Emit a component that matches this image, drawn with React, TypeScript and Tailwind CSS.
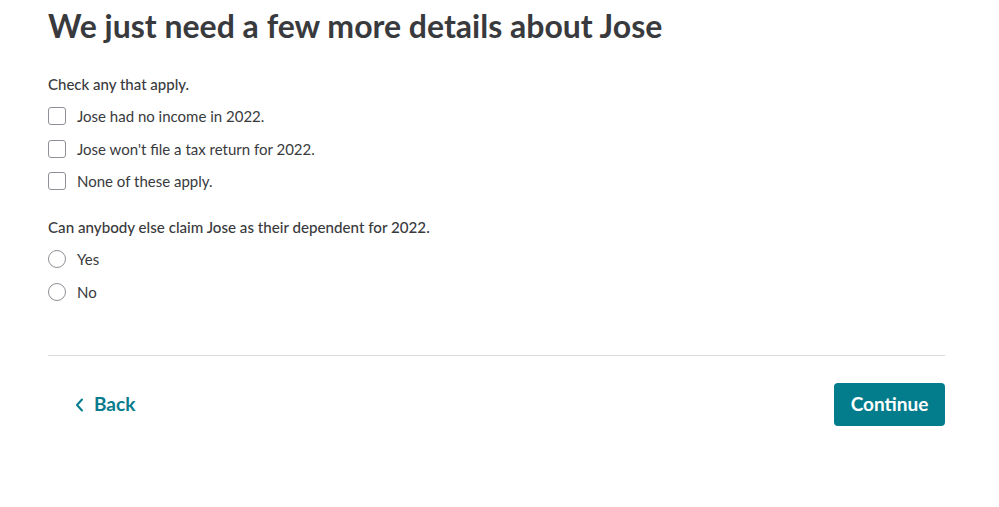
import React from "react";

export default function App() {
  return (
    <div className="w-[999px] h-[507px] bg-white text-[#393a3d]" style={{ fontFamily: "Lato, 'Open Sans', sans-serif" }}>
      <div className="ml-[48px] w-[897px] pt-[8px]">
        <h1 className="text-[32px] leading-[36px] font-bold text-[#393a3d]">We just need a few more details about Jose</h1>
        <p className="mt-[30px] text-[15px] leading-[20px] font-medium">Check any that apply.</p>
        <div className="mt-[12px] flex flex-col gap-[12.5px]">
          {["Jose had no income in 2022.", "Jose won't file a tax return for 2022.", "None of these apply."].map((t) => (
            <label key={t} className="flex items-center gap-[11px] h-[20px]">
              <span className="w-[18px] h-[18px] rounded-[3px] border border-[#8d9096] bg-white" />
              <span className="text-[15px] leading-[20px]">{t}</span>
            </label>
          ))}
        </div>
        <p className="mt-[26px] text-[15.15px] leading-[20px] font-medium">Can anybody else claim Jose as their dependent for 2022.</p>
        <div className="mt-[12px] flex flex-col gap-[13px]">
          {["Yes", "No"].map((t) => (
            <label key={t} className="flex items-center gap-[11px] h-[20px]">
              <span className="w-[18px] h-[18px] rounded-full border border-[#8d9096] bg-white" />
              <span className="text-[15px] leading-[20px]">{t}</span>
            </label>
          ))}
        </div>
        <div className="mt-[53px] border-t border-[#dcdcdc]" />
        <div className="mt-[27px] flex items-center justify-between">
          <button className="ml-[27px] flex items-center gap-[10px] text-[#077c8c] text-[19px] font-bold">
            <svg width="9" height="14" viewBox="0 0 9 14" fill="none" stroke="currentColor" strokeWidth="2" strokeLinecap="round" strokeLinejoin="round">
              <path d="M7 1.5 L2 7 L7 12.5" />
            </svg>
            <span>Back</span>
          </button>
          <button className="w-[111px] h-[43px] rounded-[4px] bg-[#037c8c] text-white text-[19px] font-bold">Continue</button>
        </div>
      </div>
    </div>
  );
}
